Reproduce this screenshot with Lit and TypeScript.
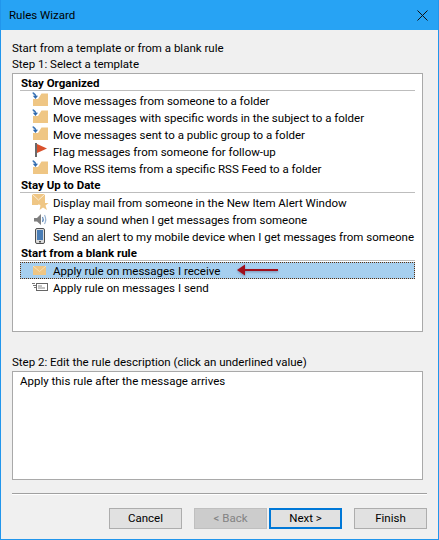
import { LitElement, css, html, svg } from "lit";
import { customElement } from "lit/decorators.js";

const moveArrow = svg`<path d="M1 0.500C1.500 2 3 2 3.500 3.500V5" fill="none" stroke="#3f77b8" stroke-width="1.600"/><path d="M0.800 3.800H6L3.500 7z" fill="#2f69ad"/>`;

const folder = html`<svg class="icon" viewBox="0 0 18 17">
  <path d="M1 14V7H6L9.500 1.500H16V14z" fill="#efc684" />
  ${moveArrow}
</svg>`;

const flag = html`<svg class="icon" viewBox="0 0 18 17">
  <rect x="3" y="0" width="2" height="14" fill="#6a6a6a" />
  <path d="M5 1L15 5.500L5 10z" fill="#d9512c" />
</svg>`;

const mailStar = html`<svg class="icon" viewBox="0 0 18 17">
  <path d="M0 0H13V9H8L6 11H0z" fill="#efc684" />
  <path d="M0 0L6.500 6L13 0" fill="none" stroke="#fbeedb" stroke-width="1" />
  <path d="M11 5L12.500 9H16.500L13.500 11.500L15 16L11 13.500L7.500 16L8.500 11.500L5.500 9H9.500z" fill="#efc684" />
</svg>`;

const speaker = html`<svg class="icon" viewBox="0 0 18 17">
  <path d="M2 7H5L9 3V14L5 10.500H2z" fill="#7f7f7f" />
  <path d="M10.500 6Q12 8.500 10.500 11" fill="none" stroke="#5a86b8" stroke-width="1.200" />
  <path d="M12.500 4Q15 8.500 12.500 13" fill="none" stroke="#9ab4d2" stroke-width="1.200" />
</svg>`;

const phone = html`<svg class="icon" viewBox="0 0 18 17">
  <rect x="3.500" y="0.500" width="9" height="15" rx="1.500" fill="#dcdcdc" stroke="#4f4f4f" />
  <rect x="5" y="2" width="6" height="10" fill="#4a7db5" />
  <rect x="7" y="13" width="2" height="1.500" fill="#4f4f4f" />
</svg>`;

const mail = html`<svg class="icon" viewBox="0 0 18 17">
  <rect x="1" y="4" width="13" height="9" fill="#efc684" />
  <path d="M1 4L7.500 9.500L14 4" fill="none" stroke="#f7dfb8" stroke-width="1" />
</svg>`;

const sendMail = html`<svg class="icon" viewBox="0 0 18 17">
  <rect x="4.500" y="4.500" width="11" height="7" fill="#fff" stroke="#666" />
  <path d="M6 7H10M6 9H13" stroke="#888" />
  <path d="M0 4.500H3M1 6.500H4M2 8.500H4" stroke="#777" />
</svg>`;

const groups = [
  {
    title: "Stay Organized",
    rows: [
      { icon: folder, text: "Move messages from someone to a folder" },
      { icon: folder, text: "Move messages with specific words in the subject to a folder" },
      { icon: folder, text: "Move messages sent to a public group to a folder" },
      { icon: flag, text: "Flag messages from someone for follow-up" },
      { icon: folder, text: "Move RSS items from a specific RSS Feed to a folder" },
    ],
  },
  {
    title: "Stay Up to Date",
    rows: [
      { icon: mailStar, text: "Display mail from someone in the New Item Alert Window" },
      { icon: speaker, text: "Play a sound when I get messages from someone" },
      { icon: phone, text: "Send an alert to my mobile device when I get messages from someone" },
    ],
  },
  {
    title: "Start from a blank rule",
    rows: [
      { icon: mail, text: "Apply rule on messages I receive", selected: true },
      { icon: sendMail, text: "Apply rule on messages I send" },
    ],
  },
];

@customElement("app-root")
export class AppRoot extends LitElement {
  static styles = css`
    :host {
      display: block;
      width: 439px;
      height: 540px;
      box-sizing: border-box;
      border: 1px solid #2196ec;
      border-top: none;
      background: #f0f0f0;
      font-family: "Roboto", sans-serif;
      font-size: 11.5px;
      line-height: 16px;
      color: #000;
      overflow: hidden;
    }

    .titlebar {
      height: 30px;
      margin: 0 -1px;
      padding: 0 11px 0 9px;
      background: #27a3f4;
      display: flex;
      align-items: center;
      justify-content: space-between;
      font-size: 11.5px;
    }

    .close {
      width: 11px;
      height: 11px;
    }

    .content {
      padding: 10px 11px 0;
    }

    .list {
      position: relative;
      box-sizing: border-box;
      width: 411px;
      height: 259px;
      margin-top: 1px;
      padding: 1px 7px 0;
      background: #fff;
      border: 1px solid #a9a9a9;
    }

    .group-title {
      height: 15px;
      padding-left: 1px;
      font-weight: 700;
      line-height: 16px;
      border-bottom: 1px solid #bdbdbd;
      margin-bottom: 1px;
      box-sizing: content-box;
      white-space: nowrap;
    }

    .row {
      position: relative;
      display: flex;
      align-items: center;
      height: 17px;
      padding-left: 12px;
      box-sizing: border-box;
      white-space: nowrap;
    }

    .row.selected {
      background: #a6cfef;
      outline: 1px dotted #5a3010;
      outline-offset: -1px;
    }

    .icon {
      flex: none;
      width: 18px;
      height: 17px;
      margin-right: 3px;
      overflow: visible;
    }

    .arrow {
      position: absolute;
      left: 217px;
      top: 2px;
      width: 42px;
      height: 12px;
      filter: drop-shadow(0 1px 1px rgba(60, 60, 90, 0.45));
    }

    .step2 {
      margin-top: 22px;
    }

    .description {
      box-sizing: border-box;
      width: 411px;
      height: 109px;
      margin-top: 1px;
      padding: 1px 7px;
      background: #fff;
      border: 1px solid #a9a9a9;
    }

    .separator {
      width: 415px;
      height: 1px;
      margin-top: 13px;
      background: #a0a0a0;
      border-bottom: 1px solid #fff;
    }

    .buttons {
      display: flex;
      width: 415px;
      margin-top: 13px;
      padding-left: 97px;
      box-sizing: border-box;
    }

    button {
      width: 73px;
      height: 21px;
      padding: 0 0 1px;
      font: inherit;
      color: #000;
      background: #e1e1e1;
      border: 1px solid #adadad;
      box-sizing: border-box;
    }

    button.back {
      margin-left: 12px;
      background: #cccccc;
      border-color: #bfbfbf;
      color: #838383;
    }

    button.next {
      margin-left: 2px;
      border: 2px solid #0078d7;
    }

    button.finish {
      margin-left: 12px;
    }
  `;

  protected render(): unknown {
    return html`
      <div class="titlebar">
        <span>Rules Wizard</span>
        <svg class="close" viewBox="0 0 11 11">
          <path d="M0.500 0.500L10.500 10.500M10.500 0.500L0.500 10.500" stroke="#111" fill="none" />
        </svg>
      </div>
      <div class="content">
        <div>Start from a template or from a blank rule</div>
        <div>Step 1: Select a template</div>
        <div class="list">
          ${groups.map(
            (group) => html`
              <div class="group-title">${group.title}</div>
              ${group.rows.map(
                (row: any) => html`
                  <div class="row ${row.selected ? "selected" : ""}">
                    ${row.icon}<span>${row.text}</span>
                    ${row.selected
                      ? html`<svg class="arrow" viewBox="0 0 42 12">
                          <path d="M8 5H41V7H8z" fill="#a00f1b" />
                          <path d="M0 6L8 0.500V11.500z" fill="#a00f1b" />
                        </svg>`
                      : ""}
                  </div>
                `
              )}
            `
          )}
        </div>
        <div class="step2">Step 2: Edit the rule description (click an underlined value)</div>
        <div class="description">Apply this rule after the message arrives</div>
        <div class="separator"></div>
        <div class="buttons">
          <button>Cancel</button>
          <button class="back" disabled>&lt; Back</button>
          <button class="next">Next &gt;</button>
          <button class="finish">Finish</button>
        </div>
      </div>
    `;
  }
}
